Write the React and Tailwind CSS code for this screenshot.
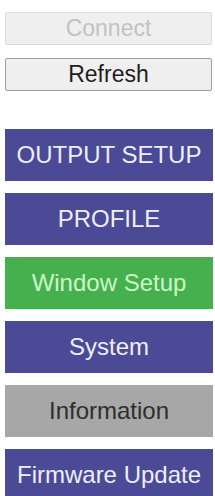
export default function App() {
  const menu = [
    { label: "OUTPUT SETUP", cls: "bg-[#4a4a96] text-[#eeeefa]" },
    { label: "PROFILE", cls: "bg-[#4a4a96] text-[#eeeefa]" },
    { label: "Window Setup", cls: "bg-[#45b04d] text-[#cdf7c6]" },
    { label: "System", cls: "bg-[#4a4a96] text-[#eeeefa]" },
    { label: "Information", cls: "bg-[#a7a7a7] text-[#2e2e2e]" },
    { label: "Firmware Update", cls: "bg-[#4a4a96] text-[#eeeefa]" },
  ];

  return (
    <div className="w-[215px] h-[496px] bg-white overflow-hidden font-['Liberation_Sans',Arial,sans-serif]">
      <div className="flex flex-col pt-[12px] pl-[5px] pr-[3px]">
        <button
          disabled
          className="h-[33px] w-full bg-[#efefef] border border-[#dcdcdc] rounded-[2px] text-[23px] leading-none text-[#c2c2c2]"
        >
          Connect
        </button>
        <button className="mt-[13px] h-[33px] w-full bg-[#efefef] border border-[#9e9e9e] rounded-[2px] text-[23px] leading-none text-[#1e1e1e]">
          Refresh
        </button>
      </div>
      <div className="flex flex-col gap-[12px] mt-[38px] pl-[5px] pr-[2px]">
        {menu.map((item, i) => (
          <button
            key={i}
            className={
              "h-[52px] w-full flex items-center justify-center text-[24px] leading-none " +
              item.cls
            }
          >
            {item.label}
          </button>
        ))}
      </div>
    </div>
  );
}
